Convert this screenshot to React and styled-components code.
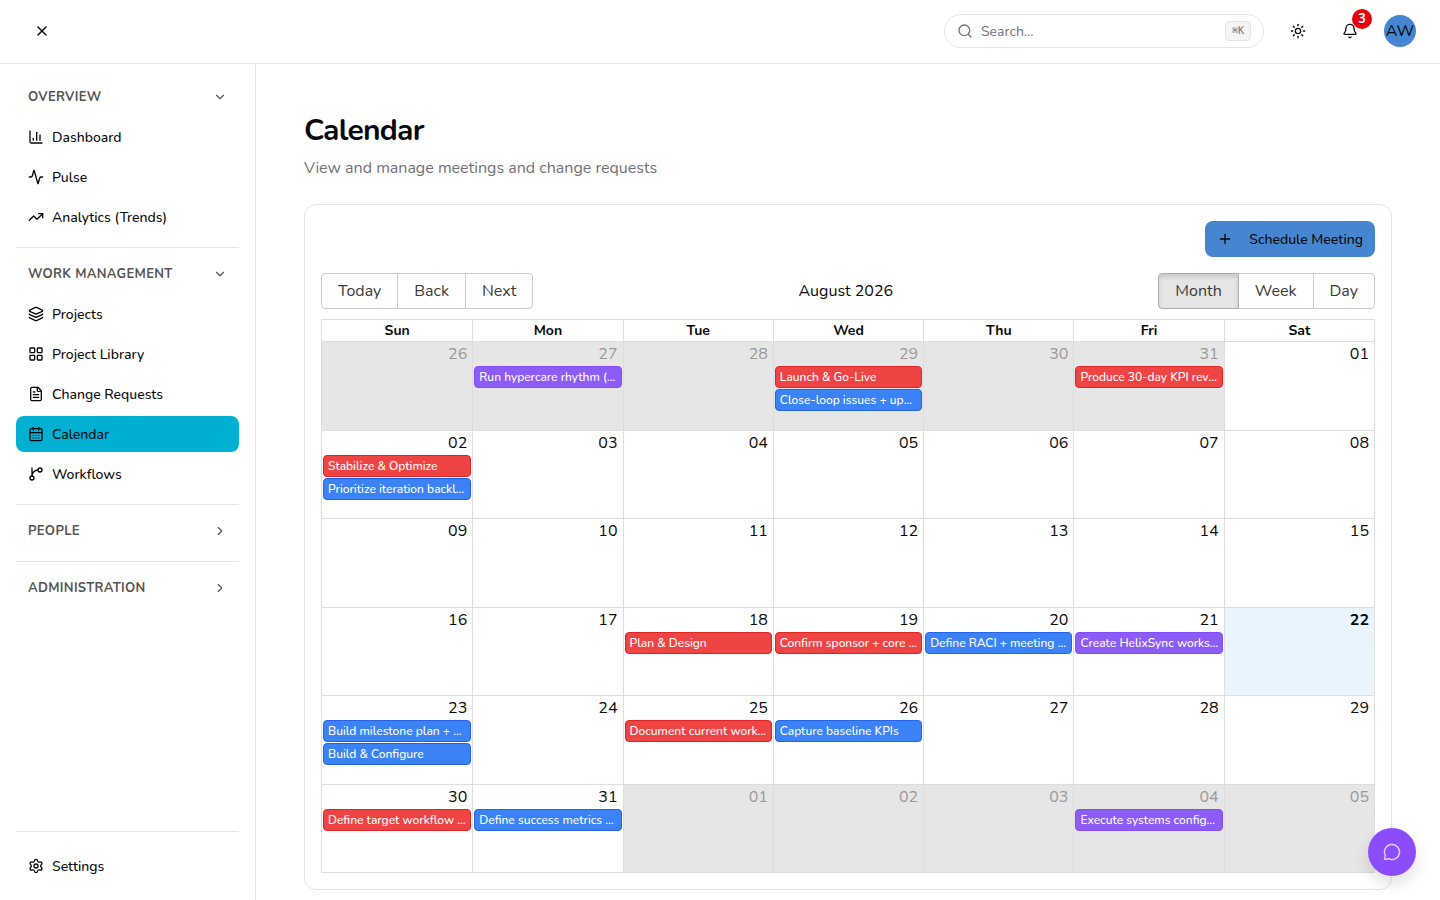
import React from 'react';
import styled, { createGlobalStyle, css } from 'styled-components';
import {
  Activity,
  Bell,
  CalendarDays,
  ChartColumn,
  ChevronDown,
  ChevronRight,
  FileText,
  Layers,
  LayoutGrid,
  MessageCircle,
  Plus,
  Search,
  Settings,
  Sun,
  TrendingUp,
  X,
} from 'lucide-react';

const GlobalStyle = createGlobalStyle`
  *, *::before, *::after {
    box-sizing: border-box;
  }
  body {
    margin: 0;
    background: #fff;
    color: #09090b;
    font-family: 'Nunito', 'Open Sans', 'Noto Sans', sans-serif;
    font-size: 16px;
    line-height: 24px;
  }
  button, input {
    font: inherit;
    color: inherit;
  }
  button {
    cursor: pointer;
  }
`;

const Page = styled.div`
  min-height: 100vh;
  display: flex;
  flex-direction: column;
`;

const Header = styled.header`
  display: flex;
  align-items: center;
  justify-content: space-between;
  height: 64px;
  padding: 0 24px 1px;
  border-bottom: 1px solid #e4e4e7;
`;

const HeaderActions = styled.div`
  display: flex;
  align-items: center;
  gap: 16px;
`;

const IconButton = styled.button`
  position: relative;
  display: grid;
  place-items: center;
  width: 36px;
  height: 36px;
  padding: 0;
  border: 0;
  border-radius: 8px;
  background: transparent;
`;

const Badge = styled.span`
  position: absolute;
  top: -4px;
  right: -4px;
  width: 20px;
  height: 20px;
  border-radius: 50%;
  background: #e7000b;
  color: #fff;
  font-size: 13px;
  font-weight: 700;
  line-height: 21px;
  text-align: center;
`;

const Avatar = styled.button`
  display: grid;
  place-items: center;
  width: 32px;
  height: 32px;
  padding: 0;
  border: 0;
  border-radius: 50%;
  background: #4686d0;
`;

const SearchBox = styled.label`
  display: flex;
  align-items: center;
  gap: 8px;
  width: 320px;
  height: 34px;
  padding: 0 12px;
  border: 1px solid #e4e4e7;
  border-radius: 17px;
  color: #71717a;
`;

const SearchInput = styled.input`
  flex: 1;
  min-width: 0;
  height: 21px;
  padding: 0;
  border: 0;
  outline: 0;
  background: transparent;
  font-size: 14px;
  line-height: 21px;

  &::placeholder {
    color: #71717a;
    opacity: 1;
  }
`;

const Kbd = styled.kbd`
  display: flex;
  align-items: center;
  height: 20px;
  padding: 0 6px;
  border: 1px solid #e4e4e7;
  border-radius: 4px;
  background: #f4f4f5;
  font-family: 'DejaVu Sans Mono', 'Liberation Mono', monospace;
  font-size: 10px;
  line-height: 16px;
`;

const Body = styled.div`
  flex: 1;
  display: flex;
`;

const Sidebar = styled.aside`
  display: flex;
  flex-direction: column;
  flex: 0 0 256px;
  padding: 15px 16px 16px;
  border-right: 1px solid #e4e4e7;
`;

const Section = styled.section`
  display: flex;
  flex-direction: column;
  gap: 4px;

  & + & {
    margin-top: 12px;
    padding-top: 8px;
    border-top: 1px solid #e4e4e7;
  }
`;

const SectionToggle = styled.button`
  display: flex;
  align-items: center;
  justify-content: space-between;
  height: 36px;
  padding: 0 12px;
  border: 0;
  background: transparent;
  color: #555;
  font-size: 13px;
  font-weight: 700;
  letter-spacing: 0.025em;
`;

const NavLink = styled.a`
  display: flex;
  align-items: center;
  gap: 8px;
  height: 36px;
  padding: 0 12px;
  border-radius: 8px;
  color: #09090b;
  font-size: 14px;
  line-height: 21px;
  font-weight: 500;
  text-decoration: none;
  background: ${({ $active }) => ($active ? '#00b0d3' : 'transparent')};
`;

const SidebarFooter = styled.div`
  margin-top: auto;
  padding-top: 16px;
  border-top: 1px solid #e4e4e7;
`;

const Main = styled.main`
  flex: 1;
  min-width: 0;
  padding: 48px 48px 10px;
`;

const Title = styled.h1`
  margin: 0 0 6px;
  font-size: 30px;
  line-height: 38px;
  font-weight: 700;
  letter-spacing: -0.025em;
`;

const Subtitle = styled.p`
  margin: 0 0 24px;
  color: #71717a;
`;

const Card = styled.div`
  padding: 16px;
  border: 1px solid #e4e4e7;
  border-radius: 12px;
`;

const CardActions = styled.div`
  display: flex;
  justify-content: flex-end;
  margin-bottom: 16px;
`;

const PrimaryButton = styled.button`
  display: flex;
  align-items: center;
  gap: 16px;
  height: 36px;
  padding: 0 12px;
  border: 0;
  border-radius: 8px;
  background: #4686d0;
  font-size: 14px;
  line-height: 21px;
  font-weight: 500;
`;

const Toolbar = styled.div`
  display: flex;
  align-items: center;
  margin-bottom: 10px;
`;

const ToolbarLabel = styled.span`
  flex: 1;
  text-align: center;
`;

const ButtonGroup = styled.div`
  display: flex;
`;

const GroupButton = styled.button`
  height: 36px;
  padding: 0 16px;
  border: 1px solid #ccc;
  background: #fff;
  color: #373a3c;

  & + & {
    margin-left: -1px;
  }
  &:first-child {
    border-radius: 4px 0 0 4px;
  }
  &:last-child {
    border-radius: 0 4px 4px 0;
  }
  ${({ $active }) =>
    $active &&
    css`
      z-index: 1;
      border-color: #adadad;
      background: #e6e6e6;
      box-shadow: inset 0 3px 5px rgba(0, 0, 0, 0.125);
    `}
`;

const MonthTable = styled.table`
  width: 100%;
  height: 554px;
  table-layout: fixed;
  border: 1px solid #ddd;
  border-collapse: separate;
  border-spacing: 0;
`;

const WeekdayCell = styled.th`
  height: 21px;
  padding: 0;
  font-size: 14px;
  line-height: 20px;
  font-weight: 700;

  & + & {
    border-left: 1px solid #ddd;
  }
`;

const DayCell = styled.td`
  height: 88px;
  padding: 0 1px;
  vertical-align: top;
  border-top: 1px solid #ddd;
  background: ${({ $off, $today }) => ($off ? '#e6e6e6' : $today ? '#e8f5ff' : '#fff')};

  & + & {
    border-left: 1px solid #ddd;
  }
`;

const DayNumber = styled.div`
  padding-right: 4px;
  text-align: right;
  color: ${({ $off }) => ($off ? '#999' : 'inherit')};
  font-weight: ${({ $today }) => ($today ? 700 : 400)};
`;

const eventColors = {
  red: ['#ef4444', '#dc2626'],
  blue: ['#3b82f6', '#2563eb'],
  violet: ['#8b5cf6', '#844bfa'],
};

const EventButton = styled.button`
  display: block;
  width: 100%;
  height: 22px;
  margin-bottom: 1px;
  padding: 0 3px 0 4px;
  overflow: hidden;
  border: 1px solid ${({ $color }) => eventColors[$color][1]};
  border-radius: 4px;
  background: ${({ $color }) => eventColors[$color][0]};
  color: #fff;
  font-size: 12px;
  font-weight: 500;
  line-height: 20px;
  text-align: left;
  text-overflow: ellipsis;
  white-space: nowrap;
`;

const ChatButton = styled.button`
  position: fixed;
  right: 24px;
  bottom: 24px;
  display: grid;
  place-items: center;
  width: 48px;
  height: 48px;
  padding: 0;
  border: 0;
  border-radius: 50%;
  background: #8b4dfb;
  color: rgba(255, 255, 255, 0.7);
  box-shadow: 0 8px 16px rgba(0, 0, 0, 0.12);
`;

function BranchIcon({ size }) {
  return (
    <svg
      width={size}
      height={size}
      viewBox="0 0 24 24"
      fill="none"
      stroke="currentColor"
      strokeWidth="2"
      strokeLinecap="round"
      strokeLinejoin="round"
      aria-hidden="true"
    >
      <path d="M15 6a9 9 0 0 0-9 9V3" />
      <circle cx="18" cy="6" r="3" />
      <circle cx="6" cy="18" r="3" />
    </svg>
  );
}

const sections = [
  {
    title: 'OVERVIEW',
    items: [
      { label: 'Dashboard', icon: ChartColumn },
      { label: 'Pulse', icon: Activity },
      { label: 'Analytics (Trends)', icon: TrendingUp },
    ],
  },
  {
    title: 'WORK MANAGEMENT',
    items: [
      { label: 'Projects', icon: Layers },
      { label: 'Project Library', icon: LayoutGrid },
      { label: 'Change Requests', icon: FileText },
      { label: 'Calendar', icon: CalendarDays, active: true },
      { label: 'Workflows', icon: BranchIcon },
    ],
  },
  { title: 'PEOPLE', items: [] },
  { title: 'ADMINISTRATION', items: [] },
];

const weekdays = ['Sun', 'Mon', 'Tue', 'Wed', 'Thu', 'Fri', 'Sat'];

// keyed by month-day
const events = {
  '7-27': [['violet', 'Run hypercare rhythm (weekly)']],
  '7-29': [['red', 'Launch & Go-Live'], ['blue', 'Close-loop issues + updates']],
  '7-31': [['red', 'Produce 30-day KPI review']],
  '8-2': [['red', 'Stabilize & Optimize'], ['blue', 'Prioritize iteration backlog']],
  '8-18': [['red', 'Plan & Design']],
  '8-19': [['red', 'Confirm sponsor + core team']],
  '8-20': [['blue', 'Define RACI + meeting cadence']],
  '8-21': [['violet', 'Create HelixSync workspace']],
  '8-23': [['blue', 'Build milestone plan + dates'], ['blue', 'Build & Configure']],
  '8-25': [['red', 'Document current workflow']],
  '8-26': [['blue', 'Capture baseline KPIs']],
  '8-30': [['red', 'Define target workflow map']],
  '8-31': [['blue', 'Define success metrics and KPIs']],
  '9-4': [['violet', 'Execute systems configuration']],
};

const weeks = Array.from({ length: 6 }, (_, week) =>
  Array.from({ length: 7 }, (_, day) => {
    const date = new Date(2026, 6, 26 + week * 7 + day);
    const month = date.getMonth() + 1;
    return {
      key: `${month}-${date.getDate()}`,
      number: String(date.getDate()).padStart(2, '0'),
      off: month !== 8,
      today: month === 8 && date.getDate() === 22,
    };
  })
);

function SideNav() {
  return (
    <Sidebar>
      <nav>
        {sections.map(({ title, items }) => (
          <Section key={title}>
            <SectionToggle aria-expanded={items.length > 0}>
              {title}
              {items.length > 0 ? <ChevronDown size={14} /> : <ChevronRight size={14} />}
            </SectionToggle>
            {items.map(({ label, icon: Icon, active }) => (
              <NavLink key={label} href="#" $active={active}>
                <Icon size={16} />
                {label}
              </NavLink>
            ))}
          </Section>
        ))}
      </nav>
      <SidebarFooter>
        <NavLink href="#">
          <Settings size={16} />
          Settings
        </NavLink>
      </SidebarFooter>
    </Sidebar>
  );
}

function MonthView() {
  return (
    <MonthTable>
      <thead>
        <tr>
          {weekdays.map((name) => (
            <WeekdayCell key={name} scope="col">{name}</WeekdayCell>
          ))}
        </tr>
      </thead>
      <tbody>
        {weeks.map((days) => (
          <tr key={days[0].key}>
            {days.map(({ key, number, off, today }) => (
              <DayCell key={key} $off={off} $today={today}>
                <DayNumber $off={off} $today={today}>{number}</DayNumber>
                {(events[key] || []).map(([color, title]) => (
                  <EventButton key={title} $color={color} title={title}>{title}</EventButton>
                ))}
              </DayCell>
            ))}
          </tr>
        ))}
      </tbody>
    </MonthTable>
  );
}

export default function App() {
  return (
    <Page>
      <GlobalStyle />
      <Header>
        <IconButton aria-label="Close menu"><X size={16} /></IconButton>
        <HeaderActions>
          <SearchBox>
            <Search size={16} />
            <SearchInput type="text" placeholder="Search..." aria-label="Search" />
            <Kbd>⌘K</Kbd>
          </SearchBox>
          <IconButton aria-label="Toggle theme"><Sun size={16} /></IconButton>
          <IconButton aria-label="Notifications">
            <Bell size={16} />
            <Badge>3</Badge>
          </IconButton>
          <Avatar aria-label="Account">AW</Avatar>
        </HeaderActions>
      </Header>
      <Body>
        <SideNav />
        <Main>
          <Title>Calendar</Title>
          <Subtitle>View and manage meetings and change requests</Subtitle>
          <Card>
            <CardActions>
              <PrimaryButton>
                <Plus size={16} />
                Schedule Meeting
              </PrimaryButton>
            </CardActions>
            <Toolbar>
              <ButtonGroup>
                <GroupButton>Today</GroupButton>
                <GroupButton>Back</GroupButton>
                <GroupButton>Next</GroupButton>
              </ButtonGroup>
              <ToolbarLabel>August 2026</ToolbarLabel>
              <ButtonGroup>
                <GroupButton $active>Month</GroupButton>
                <GroupButton>Week</GroupButton>
                <GroupButton>Day</GroupButton>
              </ButtonGroup>
            </Toolbar>
            <MonthView />
          </Card>
        </Main>
      </Body>
      <ChatButton aria-label="Open chat"><MessageCircle size={18} /></ChatButton>
    </Page>
  );
}
